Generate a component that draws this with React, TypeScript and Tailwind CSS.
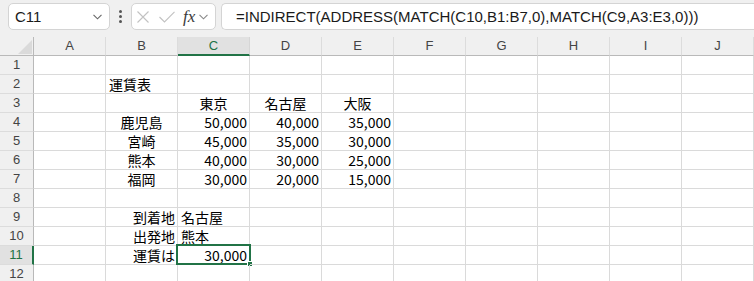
import React from "react";

type Align = "l" | "c" | "r";
type Cell = { t: string; a: Align };

const cols = ["A", "B", "C", "D", "E", "F", "G", "H", "I", "J"];

const data: Record<number, Record<string, Cell>> = {
  2: { B: { t: "運賃表", a: "l" } },
  3: { C: { t: "東京", a: "c" }, D: { t: "名古屋", a: "c" }, E: { t: "大阪", a: "c" } },
  4: { B: { t: "鹿児島", a: "c" }, C: { t: "50,000", a: "r" }, D: { t: "40,000", a: "r" }, E: { t: "35,000", a: "r" } },
  5: { B: { t: "宮崎", a: "c" }, C: { t: "45,000", a: "r" }, D: { t: "35,000", a: "r" }, E: { t: "30,000", a: "r" } },
  6: { B: { t: "熊本", a: "c" }, C: { t: "40,000", a: "r" }, D: { t: "30,000", a: "r" }, E: { t: "25,000", a: "r" } },
  7: { B: { t: "福岡", a: "c" }, C: { t: "30,000", a: "r" }, D: { t: "20,000", a: "r" }, E: { t: "15,000", a: "r" } },
  9: { B: { t: "到着地", a: "r" }, C: { t: "名古屋", a: "l" } },
  10: { B: { t: "出発地", a: "r" }, C: { t: "熊本", a: "l" } },
  11: { B: { t: "運賃は", a: "r" }, C: { t: "30,000", a: "r" } },
};

const uiFont = { fontFamily: '"Liberation Sans", Arial, sans-serif' };
const cellFont = { fontFamily: '"Noto Sans CJK JP", "Noto Sans", sans-serif' };

function Toolbar() {
  return (
    <div className="h-[37px] bg-[#f0f0f0] flex items-start pt-[3px]" style={uiFont}>
      <div className="ml-[8px] w-[102px] h-[27px] bg-white border border-[#d4d4d4] rounded-[5px] flex items-center pl-[6px] pr-[7px] justify-between">
        <span className="text-[15px] text-[#1a1a1a] leading-none">C11</span>
        <svg width="9" height="6" viewBox="0 0 9 6">
          <path d="M0.5 0.8 L4.5 4.8 L8.5 0.8" fill="none" stroke="#666" strokeWidth="1.1" />
        </svg>
      </div>
      <div className="w-[21px] h-[27px] flex flex-col items-center justify-center gap-[2px]">
        <span className="w-[3px] h-[3px] bg-[#555] rounded-full" />
        <span className="w-[3px] h-[3px] bg-[#555] rounded-full" />
        <span className="w-[3px] h-[3px] bg-[#555] rounded-full" />
      </div>
      <div className="w-[85px] h-[27px] bg-white border border-[#d4d4d4] rounded-[5px] flex items-center pl-[5px]">
        <svg width="12" height="12" viewBox="0 0 12 12">
          <path d="M0.5 0.5 L11.5 11.5 M11.5 0.5 L0.5 11.5" stroke="#c2c2c2" strokeWidth="1.1" />
        </svg>
        <svg width="16" height="12" viewBox="0 0 16 12" className="ml-[10px]">
          <path d="M0.5 6 L5.5 11 L15.5 0.8" fill="none" stroke="#c2c2c2" strokeWidth="1.1" />
        </svg>
        <span
          className="ml-[8px] text-[17px] italic text-[#3a3a3a] leading-none"
          style={{ fontFamily: '"Liberation Serif", "Times New Roman", serif' }}
        >
          fx
        </span>
        <svg width="9" height="6" viewBox="0 0 9 6" className="ml-[4px]">
          <path d="M0.5 0.8 L4.5 4.8 L8.5 0.8" fill="none" stroke="#888" strokeWidth="1.1" />
        </svg>
      </div>
      <div className="ml-[5px] flex-1 h-[27px] bg-white border border-r-0 border-[#d4d4d4] rounded-l-[5px] flex items-center pl-[14px]">
        <span className="text-[15px] text-[#1a1a1a] leading-none whitespace-nowrap">
          =INDIRECT(ADDRESS(MATCH(C10,B1:B7,0),MATCH(C9,A3:E3,0)))
        </span>
      </div>
    </div>
  );
}

function alignClass(a: Align) {
  if (a === "l") return "justify-start pl-[3px]";
  if (a === "c") return "justify-center";
  return "justify-end pr-[2px]";
}

export default function App() {
  const rows = Array.from({ length: 12 }, (_, i) => i + 1);
  return (
    <div className="w-[754px] h-[281px] overflow-hidden bg-white relative">
      <Toolbar />
      <div className="grid grid-cols-[34px_repeat(10,72px)] auto-rows-[19px]" style={uiFont}>
        <div className="bg-[#f0f0f0] border-r border-b border-[#b9b9b9] relative overflow-hidden">
          <svg width="14" height="14" viewBox="0 0 14 14" className="absolute right-[1px] bottom-[1px]">
            <path d="M14 0 L14 14 L0 14 Z" fill="#dadada" />
          </svg>
        </div>
        {cols.map((c) => (
          <div
            key={c}
            className={
              c === "C"
                ? "bg-[#e1e1e1] border-r border-r-[#d6d6d6] border-b-2 border-b-[#217346] flex items-center justify-center text-[13px] text-[#217346]"
                : "bg-[#f0f0f0] border-r border-r-[#dcdcdc] border-b border-b-[#b9b9b9] flex items-center justify-center text-[13px] text-[#444]"
            }
          >
            {c}
          </div>
        ))}
        {rows.map((r) => (
          <React.Fragment key={r}>
            <div
              className={
                r === 11
                  ? "bg-[#e1e1e1] border-r-2 border-r-[#217346] border-b border-b-[#dcdcdc] flex items-center justify-center text-[13px] text-[#217346]"
                  : "bg-[#f0f0f0] border-r border-r-[#b9b9b9] border-b border-b-[#dcdcdc] flex items-center justify-center text-[13px] text-[#444]"
              }
            >
              {r}
            </div>
            {cols.map((c) => {
              const cell = data[r]?.[c];
              const selected = r === 11 && c === "C";
              return (
                <div
                  key={c}
                  className={
                    "border-r border-b border-[#dadada] flex items-center whitespace-nowrap text-[14px] text-black relative " +
                    (cell ? alignClass(cell.a) : "")
                  }
                  style={cellFont}
                >
                  {cell ? <span className="leading-none">{cell.t}</span> : null}
                  {selected ? (
                    <div className="absolute left-[-2px] top-[-2px] w-[75px] h-[21px] border-2 border-[#217346]">
                      <div className="absolute right-[-4px] bottom-[-4px] w-[6px] h-[6px] bg-[#217346] border border-white" />
                    </div>
                  ) : null}
                </div>
              );
            })}
          </React.Fragment>
        ))}
      </div>
    </div>
  );
}
